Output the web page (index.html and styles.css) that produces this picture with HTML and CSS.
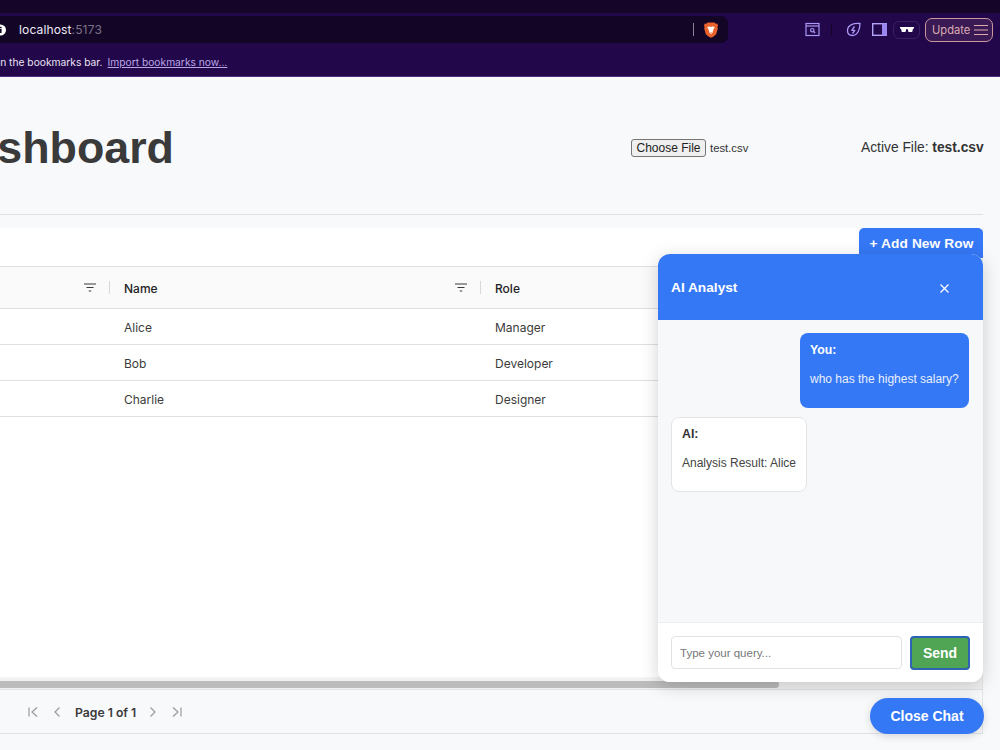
FILE: index.html
```html
<!DOCTYPE html>
<html lang="en">
<head>
<meta charset="utf-8">
<title>Dashboard</title>
<link rel="stylesheet" href="styles.css">
</head>
<body>
<div class="screen">
  <div class="chrome">
    <div class="tabstrip"></div>
    <div class="toolbar">
      <div class="urlbar">
        <svg class="info" width="12" height="12" viewBox="0 0 12 12"><circle cx="0.500" cy="6" r="5.500" fill="#fff"/><rect x="0" y="5" width="1.600" height="4" fill="#130526"/><rect x="0" y="2.800" width="1.600" height="1.500" fill="#130526"/></svg>
        <span class="host">localhost<span class="port">:5173</span></span>
        <span class="url-sep"></span>
        <svg class="brave" width="14" height="16" viewBox="0 0 14 16"><path d="M3.5 0.5h7l1 1.2 1.7-.2.8 2-.6 1.8.4 1.2-1.6 5.8-2.6 2.2L7 15.8l-2.6-1.3-2.6-2.2L.2 6.5l.4-1.2L0 3.500l.8-2 1.700.2z" fill="#e9612d"/><path d="M3.2 5l2.4-.6L7 5l1.400-.6 2.400.6-1.600 3L8.400 11 7 12l-1.400-1-.8-3z" fill="#fff"/><path d="M5.900 10.400h2.200L7 11.400z" fill="#e9612d"/></svg>
      </div>
      <div class="tools">
        <svg class="tool-reader" width="15" height="15" viewBox="0 0 15 15" fill="none" stroke="#a897f5" stroke-width="1.200"><rect x="1" y="1.500" width="13" height="12"/><path d="M1 4h13"/><circle cx="7.300" cy="8.200" r="1.700"/><path d="M8.600 9.500l1.500 1.500"/></svg>
        <span class="tool-sep"></span>
        <svg class="tool-leaf" width="15" height="15" viewBox="0 0 15 15" fill="none" stroke="#a897f5" stroke-width="1.300"><path d="M14 1.500C8 1 1.500 2.500 1.500 8.500c0 3 2 5 5 5 5 0 7.500-6 7.500-12z"/><path d="M8.500 4.500L5.800 8.300h3L6.500 11.500" stroke-linejoin="round"/></svg>
        <svg class="tool-panel" width="15" height="13" viewBox="0 0 15 13"><rect x="0.700" y="0.700" width="13.600" height="11.600" fill="#22074a" stroke="#b3a3f7" stroke-width="1.400"/><rect x="10" y="0.500" width="5" height="12" fill="#9a86f0"/></svg>
        <span class="shield">
          <svg width="14" height="6" viewBox="0 0 14 6"><path d="M0 0h14v1.500l-1 .3-.8 3.200H8.500L7.600 2H6.400l-.9 3H1.800L1 1.800 0 1.500z" fill="#fff"/></svg>
        </span>
        <span class="update">Update
          <svg width="14" height="12" viewBox="0 0 14 12" fill="none" stroke="#e0a9ab" stroke-width="1"><path d="M0 1.500h14M0 6h14M0 10.500h14"/></svg>
        </span>
      </div>
    </div>
    <div class="bookmarks">
      <span class="bm-text">For quick access, place your bookmarks here on the bookmarks bar.</span>
      <a class="bm-link" href="#">Import bookmarks now...</a>
    </div>
  </div>

  <main class="page">
    <header class="page-head">
      <h1 class="title">Dashboard</h1>
      <div class="file-pick">
        <button class="file-btn" type="button">Choose File</button>
        <span class="file-name">test.csv</span>
      </div>
      <p class="active-file">Active File: <strong>test.csv</strong></p>
    </header>

    <section class="table-card">
      <div class="table-tools">
        <button class="add-row" type="button">+ Add New Row</button>
      </div>
      <div class="grid-head">
        <div class="cell head-cell">
          <svg class="filter" width="12" height="9" viewBox="0 0 12 9" fill="none" stroke="#3a3a3a" stroke-width="1.200"><path d="M0 1h12M2.500 4.500h7M4.800 8h2.400"/></svg>
          <span class="col-sep"></span>
        </div>
        <div class="cell head-cell">
          <span class="head-label">Name</span>
          <svg class="filter" width="12" height="9" viewBox="0 0 12 9" fill="none" stroke="#3a3a3a" stroke-width="1.200"><path d="M0 1h12M2.500 4.500h7M4.800 8h2.400"/></svg>
          <span class="col-sep"></span>
        </div>
        <div class="cell head-cell"><span class="head-label">Role</span></div>
      </div>
      <div class="grid-row"><div class="cell"></div><div class="cell">Alice</div><div class="cell">Manager</div></div>
      <div class="grid-row"><div class="cell"></div><div class="cell">Bob</div><div class="cell">Developer</div></div>
      <div class="grid-row"><div class="cell"></div><div class="cell">Charlie</div><div class="cell">Designer</div></div>
      <div class="grid-fill"></div>
      <div class="scroll-track"><div class="scroll-thumb"></div></div>
      <footer class="pager">
        <svg width="12" height="12" viewBox="0 0 12 12" class="pg-icon"><path d="M2 1.500v9M10 1.500L5 6l5 4.500"/></svg>
        <svg width="12" height="12" viewBox="0 0 12 12" class="pg-icon"><path d="M8.500 1.500L4 6l4.500 4.500"/></svg>
        <span class="page-label">Page 1 of 1</span>
        <svg width="12" height="12" viewBox="0 0 12 12" class="pg-icon"><path d="M3.500 1.500L8 6l-4.500 4.500"/></svg>
        <svg width="12" height="12" viewBox="0 0 12 12" class="pg-icon"><path d="M2 1.500L7 6l-5 4.500M10 1.500v9"/></svg>
      </footer>
    </section>
  </main>

  <aside class="chat">
    <div class="chat-head">
      <span class="chat-title">AI Analyst</span>
      <span class="chat-close">
        <svg width="9" height="9" viewBox="0 0 9 9" fill="none" stroke="#fff" stroke-width="1.200"><path d="M.5.500l8 8M8.500.500l-8 8"/></svg>
      </span>
    </div>
    <div class="chat-log">
      <div class="msg msg-user">
        <strong class="msg-who">You:</strong>
        <p class="msg-text">who has the highest salary?</p>
      </div>
      <div class="msg msg-ai">
        <strong class="msg-who">AI:</strong>
        <p class="msg-text">Analysis Result: Alice</p>
      </div>
    </div>
    <div class="chat-form">
      <input class="chat-input" type="text" placeholder="Type your query...">
      <button class="chat-send" type="button">Send</button>
    </div>
  </aside>
  <button class="chat-toggle" type="button">Close Chat</button>
</div>
</body>
</html>
```
FILE: styles.css
```css
* { box-sizing: border-box; }
html, body { margin: 0; height: 100%; }
body { overflow: hidden; background: #f8f9fb; font-family: "Liberation Sans", Arial, sans-serif; color: #333; }
.screen { position: relative; width: 1000px; height: 750px; overflow: hidden; display: flex; flex-direction: column; }

/* browser chrome */
.chrome { flex: none; height: 77px; background: #22074a; border-bottom: 1px solid #4a2f7c; display: flex; flex-direction: column; font-family: Inter, "Noto Sans", sans-serif; }
.tabstrip { height: 13px; background: #150629; flex: none; }
.toolbar { height: 30px; flex: none; display: flex; align-items: center; justify-content: space-between; padding-top: 3px; }
.urlbar { width: 728px; height: 27px; background: #130526; border-radius: 0 7px 7px 0; display: flex; align-items: center; }
.info { flex: none; }
.host { margin-left: 7px; font-size: 12.100px; color: #eee9f5; letter-spacing: .1px; }
.port { color: #7b7287; }
.url-sep { width: 1px; height: 13px; background: #8a8494; margin-left: auto; }
.brave { margin: 0 10px 0 10px; flex: none; }
.tools { display: flex; align-items: center; padding-right: 7px; height: 27px; }
.tool-reader { margin-right: 11px; }
.tool-sep { width: 1px; height: 13px; background: #14052a; margin-right: 14px; }
.tool-leaf { margin-right: 11px; }
.tool-panel { margin-right: 6px; }
.shield { width: 27px; height: 18px; border: 1px solid #3a2166; border-radius: 6px; display: flex; align-items: center; justify-content: center; margin-right: 5px; }
.update { width: 68px; height: 24px; border: 1px solid #c9979d; border-radius: 7px; background: #3a1a55; color: #d9abb2; font-size: 11.200px; display: flex; align-items: center; justify-content: space-between; padding: 0 4px 0 6px; }
.bookmarks { flex: 1; display: flex; align-items: center; justify-content: flex-start; margin-left: -229px; font-size: 10.250px; color: #e9e3f3; padding-top: 4px; white-space: nowrap; }
.bm-link { color: #b9a6e6; margin-left: 5px; }

/* page */
.page { flex: 1; min-height: 0; padding-right: 17px; display: flex; flex-direction: column; }
.page-head { height: 138px; flex: none; border-bottom: 1px solid #dfe2e7; position: relative; display: flex; align-items: center; padding-top: 4px; }
.title { margin: 0 0 0 -60px; font-size: 44.800px; font-weight: 700; color: #3a3a3a; white-space: nowrap; width: 691px; flex: none; }
.file-pick { display: flex; align-items: center; gap: 4px; width: 230px; flex: none; }
.file-btn { height: 18px; width: 75px; padding: 0; font: 12px "Liberation Sans", Arial, sans-serif; color: #222; background: #efefef; border: 1px solid #767676; border-radius: 3px; }
.file-name { font-size: 11.300px; color: #333; }
.active-file { margin: 0 0 0 auto; font-size: 13.800px; color: #333; white-space: nowrap; }
.active-file strong { font-weight: 700; }

.table-card { flex: 1; min-height: 0; margin-top: 13px; margin-bottom: 16px; border-right: 1px solid #e4e6ea; border-bottom: 1px solid #dfe2e7; display: flex; flex-direction: column; font-family: Inter, "Noto Sans", sans-serif; font-size: 12px; color: #3b3b3b; }
.table-tools { height: 39px; flex: none; background: #fff; border-bottom: 1px solid #e0e0e0; display: flex; justify-content: flex-end; }
.add-row { width: 124px; height: 30px; margin-right: -1px; padding: 0 0 0 1px; border: 0; border-radius: 5px 5px 0 0; background: #3578f6; color: #fff; font: 700 13.700px "Liberation Sans", Arial, sans-serif; letter-spacing: .1px; }
.grid-head, .grid-row { display: grid; grid-template-columns: 110px 371px 1fr; flex: none; border-bottom: 1px solid #e0e0e0; }
.grid-head { height: 42px; background: #fafafa; }
.grid-row { height: 36px; background: #fff; }
.cell { display: flex; align-items: center; padding: 2px 0 0 14px; }
.head-cell { font-weight: 450; color: #222; position: relative; padding-top: 1px; }
.filter { position: absolute; right: 14px; top: 16px; }
.col-sep { position: absolute; right: 0; top: 14px; width: 1px; height: 13px; background: #d8d8d8; }
.grid-fill { flex: 1; min-height: 0; background: #fff; }
.scroll-track { flex: none; height: 13px; background: #f1f1f1; border-top: 1px solid #f4f4f4; border-bottom: 1px solid #e2e2e2; padding: 3px 0 1px; }
.scroll-thumb { width: 779px; height: 7px; background: #bcbcbc; border-radius: 0 4px 4px 0; }
.pager { height: 43px; flex: none; display: flex; align-items: center; background: #f8f9fb; padding: 1px 0 0 27px; gap: 12px; }
.pg-icon { fill: none; stroke: #9a9a9a; stroke-width: 1.200; }
.page-label { font-weight: 600; color: #3a3a3a; font-size: 12.200px; margin-right: -1px; }

/* chat overlay */
.chat { position: absolute; left: 658px; top: 254px; width: 325px; height: 428px; border-radius: 12px; overflow: hidden; background: #fff; box-shadow: 0 4px 18px rgba(0,0,0,.18); display: flex; flex-direction: column; }
.chat-head { height: 66px; flex: none; background: #3578f6; display: flex; align-items: center; justify-content: space-between; padding: 0 34px 0 13px; color: #fff; }
.chat-title { font-size: 13.700px; font-weight: 700; }
.chat-close { display: flex; padding-top: 2px; }
.chat-log { flex: 1; min-height: 0; background: #f7f8fa; border-bottom: 1px solid #eceef1; padding: 13px 14px 0 13px; display: flex; flex-direction: column; gap: 9px; }
.msg { border-radius: 8px; padding: 10px 10px; font-size: 12px; height: 75px; white-space: nowrap; }
.msg-who { display: block; font-size: 12.300px; line-height: 15px; }
.msg-text { margin: 14px 0 0; line-height: 15px; }
.msg-user { align-self: flex-end; width: 169px; background: #3578f6; color: #fff; }
.msg-user .msg-text { color: #e8effd; }
.msg-ai { align-self: flex-start; width: 136px; background: #fff; border: 1px solid #e2e4e8; padding: 9px 10px; color: #444; }
.msg-ai .msg-who { color: #333; }
.chat-form { height: 59px; flex: none; display: flex; gap: 8px; padding: 13px 12px 0 13px; background: #fff; }
.chat-input { width: 231px; height: 33px; border: 1px solid #e0e2e6; border-radius: 4px; padding: 0 8px; font: 11.500px "Liberation Sans", Arial, sans-serif; color: #333; background: #fff; }
.chat-input::placeholder { color: #777; }
.chat-send { width: 60px; height: 34px; padding: 0; border: 2px solid #2e62b5; border-radius: 4px; background: #4fa553; color: #fff; font: 700 14px "Liberation Sans", Arial, sans-serif; }
.chat-toggle { position: absolute; left: 870px; top: 698px; width: 114px; height: 36px; border: 0; border-radius: 18px; background: #3578f6; color: #fff; font: 700 14px "Liberation Sans", Arial, sans-serif; box-shadow: 0 2px 8px rgba(0,0,0,.15); }
```
